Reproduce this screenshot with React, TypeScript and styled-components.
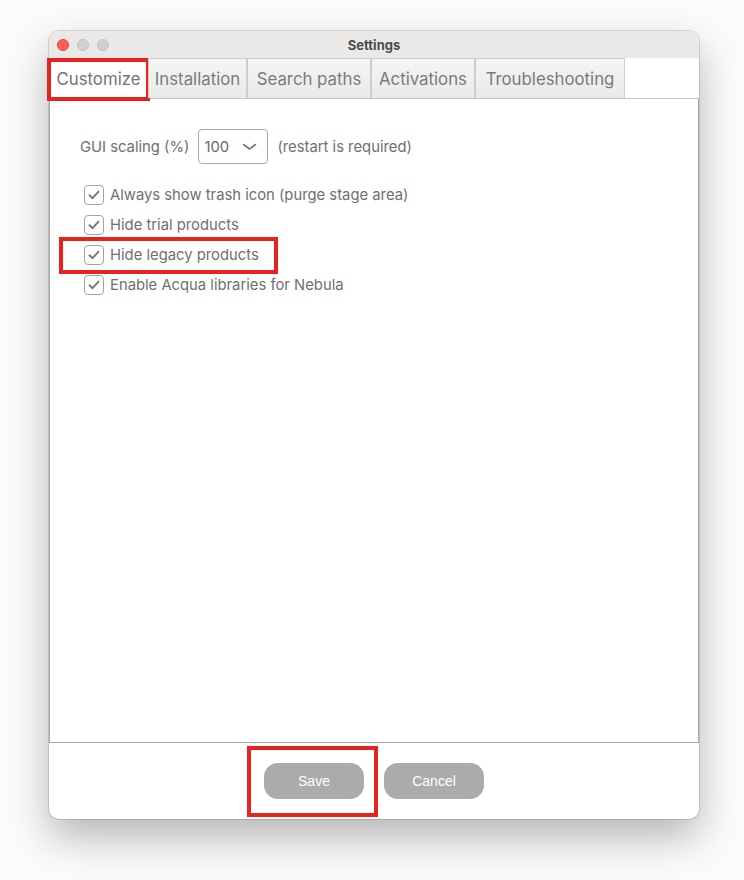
import React, { ReactElement } from 'react';
import styled, { createGlobalStyle } from 'styled-components';

const GlobalStyle = createGlobalStyle`
  html, body {
    margin: 0;
    padding: 0;
    background: #ffffff;
  }
  body {
    font-family: Inter, "Noto Sans", "Liberation Sans", sans-serif;
  }
`;

const markColor = '#e5231f';

const Page = styled.div`
  box-sizing: border-box;
  width: 744px;
  height: 880px;
  padding: 31px 0 0 49px;
  background: #fbfbfb;
`;

const Window = styled.div`
  width: 650px;
  height: 788px;
  display: flex;
  flex-direction: column;
  border-radius: 10px;
  background: #ffffff;
  box-shadow: 0 0 0 1px rgba(0, 0, 0, 0.12), 0 18px 40px rgba(0, 0, 0, 0.28);
`;

const TitleBar = styled.div`
  height: 27px;
  flex: none;
  display: grid;
  grid-template-columns: 1fr auto 1fr;
  align-items: center;
  padding: 0 8px;
  background: #ebe9e8;
  border-radius: 10px 10px 0 0;
`;

const Lights = styled.div`
  display: flex;
  gap: 8px;
`;

const Light = styled.span<{ $color: string; $edge: string }>`
  width: 12px;
  height: 12px;
  border-radius: 50%;
  box-sizing: border-box;
  background: ${p => p.$color};
  border: 1px solid ${p => p.$edge};
`;

const Title = styled.div`
  font-size: 13px;
  font-weight: 700;
  color: #4b4b4b;
`;

const TabBar = styled.div`
  height: 40px;
  flex: none;
  display: flex;
  background: #ffffff;
`;

const Tab = styled.div<{ $width: number; $active?: boolean; $marked?: boolean }>`
  position: relative;
  box-sizing: border-box;
  width: ${p => p.$width}px;
  display: flex;
  align-items: center;
  justify-content: center;
  font-size: 16.8px;
  color: ${p => (p.$active ? '#737373' : '#7b7b7b')};
  border: 1px solid #cdcdcd;
  border-bottom: none;
  background: ${p =>
    p.$active ? '#ffffff' : 'linear-gradient(#f5f5f5, #e9e9e9)'};

  &::after {
    content: '';
    display: ${p => (p.$marked ? 'block' : 'none')};
    position: absolute;
    left: -3px;
    right: -3px;
    top: -1px;
    bottom: -3px;
    border: 4px solid ${markColor};
  }
`;

const Panel = styled.div`
  flex: 1;
  display: flex;
  flex-direction: column;
  align-items: flex-start;
  padding: 30px 30px;
  border: 1px solid #a3a9a9;
  border-top-color: #c8c8c8;
  color: #6f6f6f;
  font-size: 14.8px;
`;

const ScaleRow = styled.div`
  display: flex;
  align-items: center;
  gap: 9px;
  margin-bottom: 16px;
`;

const Select = styled.div`
  box-sizing: border-box;
  width: 70px;
  height: 35px;
  display: flex;
  align-items: center;
  justify-content: space-between;
  padding: 0 10px 0 5px;
  border: 1px solid #a9a9a9;
  border-radius: 4px;
  color: #6a6a6a;
`;

const CheckRow = styled.label<{ $marked?: boolean }>`
  position: relative;
  height: 30px;
  display: inline-flex;
  align-items: center;
  gap: 6px;
  padding-left: 4px;

  &::after {
    content: '';
    display: ${p => (p.$marked ? 'block' : 'none')};
    position: absolute;
    left: -21px;
    right: -19px;
    top: -3px;
    bottom: -4px;
    border: 4px solid ${markColor};
  }
`;

const Box = styled.span`
  box-sizing: border-box;
  width: 20px;
  height: 20px;
  display: flex;
  align-items: center;
  justify-content: center;
  border: 1.2px solid #a3a3a3;
  border-radius: 4px;
  background: #ffffff;
`;

const Footer = styled.div`
  height: 76px;
  flex: none;
  display: flex;
  align-items: center;
  justify-content: center;
  gap: 20px;
  border-radius: 0 0 10px 10px;
`;

const Button = styled.button<{ $marked?: boolean }>`
  position: relative;
  width: 100px;
  height: 36px;
  border: none;
  border-radius: 14px;
  background: #ababab;
  color: #ffffff;
  font-family: "Liberation Sans", Arial, sans-serif;
  font-size: 14px;
  font-weight: 500;

  &::after {
    content: '';
    display: ${p => (p.$marked ? 'block' : 'none')};
    position: absolute;
    left: -17px;
    right: -14px;
    top: -17px;
    bottom: -18px;
    border: 4px solid ${markColor};
  }
`;

function Check(): ReactElement {
  return (
    <svg width="14" height="12" viewBox="0 0 14 12">
      <polyline points="2.5,6.2 5.6,9.2 11.5,2.6" fill="none" stroke="#777" strokeWidth="1.9"
        strokeLinecap="round" strokeLinejoin="round" />
    </svg>
  );
}

function Chevron(): ReactElement {
  return (
    <svg width="15" height="8" viewBox="0 0 15 8">
      <polyline points="1.5,1.5 7.5,6 13.5,1.5" fill="none" stroke="#777" strokeWidth="1.6"
        strokeLinecap="round" strokeLinejoin="round" />
    </svg>
  );
}

const tabs = [
  { name: 'Customize', width: 99 },
  { name: 'Installation', width: 99 },
  { name: 'Search paths', width: 124 },
  { name: 'Activations', width: 104 },
  { name: 'Troubleshooting', width: 150 },
];

const options = [
  { label: 'Always show trash icon (purge stage area)' },
  { label: 'Hide trial products' },
  { label: 'Hide legacy products', marked: true },
  { label: 'Enable Acqua libraries for Nebula' },
];

export default function App(): ReactElement {
  return (
    <Page>
      <GlobalStyle />
      <Window>
        <TitleBar>
          <Lights>
            <Light $color="#fe5f57" $edge="#e0443e" />
            <Light $color="#d3d1d0" $edge="#c2c0bf" />
            <Light $color="#d3d1d0" $edge="#c2c0bf" />
          </Lights>
          <Title>Settings</Title>
          <span />
        </TitleBar>
        <TabBar>
          {tabs.map((t, i) => (
            <Tab key={t.name} $width={t.width} $active={i === 0} $marked={i === 0}>{t.name}</Tab>
          ))}
        </TabBar>
        <Panel>
          <ScaleRow>
            <span>GUI scaling (%)</span>
            <Select>
              <span>100</span>
              <Chevron />
            </Select>
            <span>(restart is required)</span>
          </ScaleRow>
          {options.map(o => (
            <CheckRow key={o.label} $marked={o.marked}>
              <Box><Check /></Box>
              {o.label}
            </CheckRow>
          ))}
        </Panel>
        <Footer>
          <Button $marked>Save</Button>
          <Button>Cancel</Button>
        </Footer>
      </Window>
    </Page>
  );
}
